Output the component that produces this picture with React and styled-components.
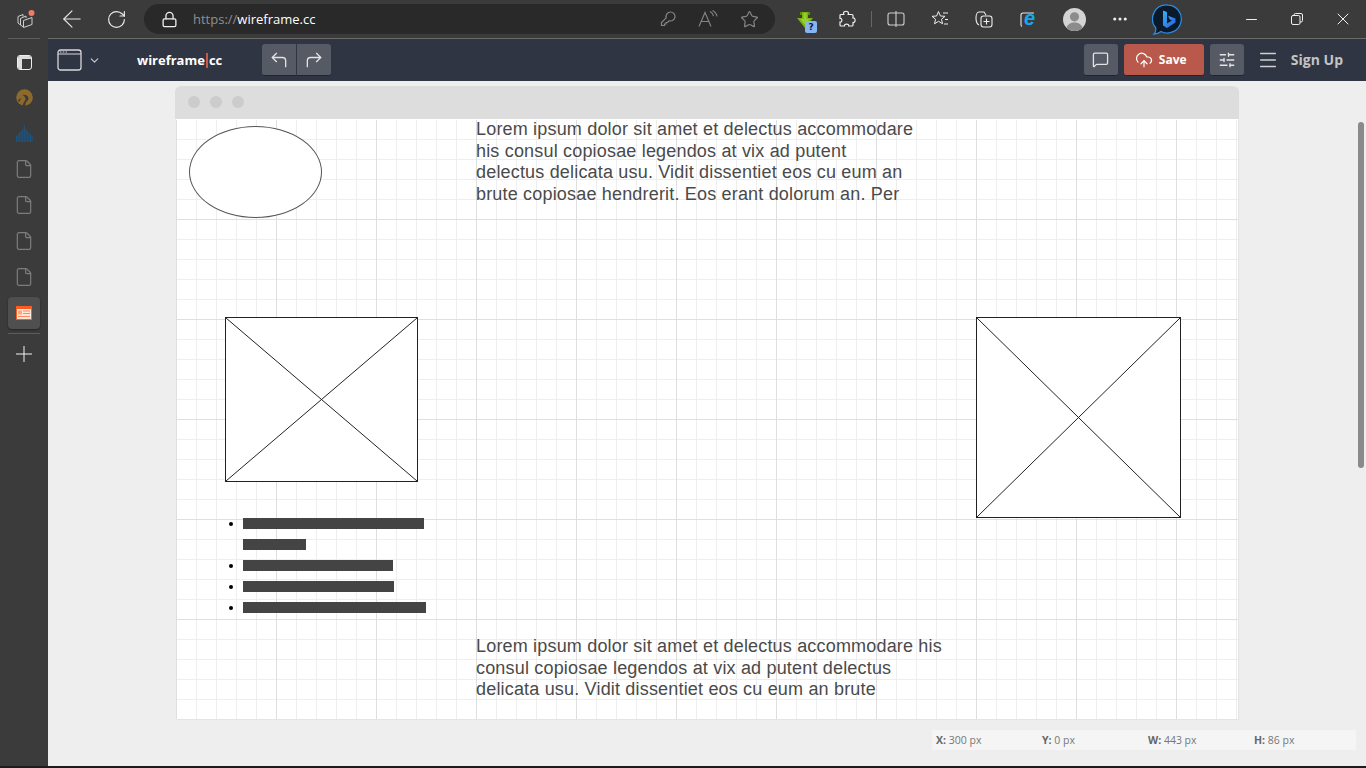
import React from "react";
import styled, { createGlobalStyle } from "styled-components";
import {
  ArrowLeft,
  ChevronDown,
  CloudUpload,
  CornerUpLeft,
  CornerUpRight,
  Ellipsis,
  File,
  Lock,
  Menu,
  MessageSquare,
  Minus,
  Plus,
  RotateCw,
  SlidersHorizontal,
  Star,
  X,
} from "lucide-react";

const GlobalStyle = createGlobalStyle`
  html, body {
    margin: 0;
    height: 100%;
    overflow: hidden;
    background: #3b3b3b;
    font-family: "Open Sans", "Liberation Sans", sans-serif;
  }
`;

const App = () => {
  return (
    <>
      <GlobalStyle />
      <Page>
        <BrowserBar>
          <Slot $w={52}>
            <WorkspaceIcon />
          </Slot>
          <Slot $w={40}>
            <ArrowLeft size={28} strokeWidth={1.1} absoluteStrokeWidth color="#e8e8e8" />
          </Slot>
          <Slot $w={48}>
            <RotateCw size={21} strokeWidth={1.2} absoluteStrokeWidth color="#e8e8e8" />
          </Slot>
          <AddressBar>
            <Lock size={17} strokeWidth={1.3} absoluteStrokeWidth color="#f0f0f0" />
            <Url>
              <span>https://</span>wireframe.cc
            </Url>
            <AddressIcons>
              <KeyIcon />
              <ReadAloudIcon />
              <Star size={19} strokeWidth={1.2} absoluteStrokeWidth color="#858585" />
            </AddressIcons>
          </AddressBar>
          <Slot $w={40} $ml={10}>
            <DownloadIcon />
          </Slot>
          <Slot $w={44}>
            <PuzzleIcon />
          </Slot>
          <BarDivider />
          <Slot $w={46}>
            <SplitIcon />
          </Slot>
          <Slot $w={42}>
            <FavoritesIcon />
          </Slot>
          <Slot $w={46}>
            <CollectionsIcon />
          </Slot>
          <Slot $w={42}>
            <IeIcon />
          </Slot>
          <Slot $w={50}>
            <ProfileIcon />
          </Slot>
          <Slot $w={42}>
            <Ellipsis size={18} strokeWidth={1.6} absoluteStrokeWidth color="#eeeeee" />
          </Slot>
          <Slot $w={52}>
            <BingIcon />
          </Slot>
          <Spacer />
          <Slot $w={46}>
            <Minus size={17} strokeWidth={1} absoluteStrokeWidth color="#f0f0f0" />
          </Slot>
          <Slot $w={46}>
            <RestoreIcon />
          </Slot>
          <Slot $w={46}>
            <X size={20} strokeWidth={1} absoluteStrokeWidth color="#f0f0f0" />
          </Slot>
        </BrowserBar>

        <Body>
          <SideBar>
            <SideRule $mt={0} $mb={7} />
            <SideSlot $h={33}>
              <TabsIcon />
            </SideSlot>
            <SideSlot>
              <PeakIcon />
            </SideSlot>
            <SideSlot>
              <ChartIcon />
            </SideSlot>
            {[0, 1, 2, 3].map((n) => (
              <SideSlot key={n}>
                <File size={20} strokeWidth={1.2} absoluteStrokeWidth color="#7d7d7d" />
              </SideSlot>
            ))}
            <ActiveTab>
              <WireTabIcon />
            </ActiveTab>
            <SideRule $mt={4} $mb={2} />
            <SideSlot>
              <Plus size={26} strokeWidth={1} absoluteStrokeWidth color="#f4f4f4" />
            </SideSlot>
          </SideBar>

          <Content>
            <AppBar>
              <WindowIcon />
              <ChevronSlot>
                <ChevronDown size={13} strokeWidth={1.2} absoluteStrokeWidth color="#c4c7cc" />
              </ChevronSlot>
              <Logo>
                wireframe<i />cc
              </Logo>
              <ButtonGroup>
                <ToolButton $joined="left">
                  <CornerUpLeft size={20} strokeWidth={1.3} absoluteStrokeWidth color="#e4e4e4" />
                </ToolButton>
                <ToolButton $joined="right">
                  <CornerUpRight size={20} strokeWidth={1.3} absoluteStrokeWidth color="#e4e4e4" />
                </ToolButton>
              </ButtonGroup>
              <Spacer />
              <ToolButton>
                <MessageSquare size={17} strokeWidth={1.3} absoluteStrokeWidth color="#e4e4e4" />
              </ToolButton>
              <SaveButton>
                <CloudUpload size={18} strokeWidth={1.2} absoluteStrokeWidth color="#ffffff" />
                Save
              </SaveButton>
              <ToolButton>
                <SlidersHorizontal size={18} strokeWidth={1.3} absoluteStrokeWidth color="#e4e4e4" />
              </ToolButton>
              <MenuSlot>
                <Menu size={22} strokeWidth={1.5} absoluteStrokeWidth color="#d0d0d0" />
              </MenuSlot>
              <SignUp>Sign Up</SignUp>
            </AppBar>

            <Workspace>
              <Frame>
                <FrameHeader>
                  <Dot />
                  <Dot />
                  <Dot />
                </FrameHeader>
                <Canvas>
                  <Ellipse />
                  <LoremTop>
                    Lorem ipsum dolor sit amet et delectus accommodare his
                    consul copiosae legendos at vix ad putent delectus delicata
                    usu. Vidit dissentiet eos cu eum an brute copiosae
                    hendrerit. Eos erant dolorum an. Per
                  </LoremTop>
                  <ImageBox $x={49} $y={198} $w={193} $h={165}>
                    <CrossLines />
                  </ImageBox>
                  <ImageBox $x={800} $y={198} $w={205} $h={201}>
                    <CrossLines />
                  </ImageBox>
                  <BarList>
                    <BarItem>
                      <Bar $w={181} />
                      <Bar $w={63} />
                    </BarItem>
                    <BarItem>
                      <Bar $w={150} />
                    </BarItem>
                    <BarItem>
                      <Bar $w={151} />
                    </BarItem>
                    <BarItem>
                      <Bar $w={183} />
                    </BarItem>
                  </BarList>
                  <LoremBottom>
                    Lorem ipsum dolor sit amet et delectus accommodare his
                    consul copiosae legendos at vix ad putent delectus delicata
                    usu. Vidit dissentiet eos cu eum an brute
                  </LoremBottom>
                </Canvas>
              </Frame>
              <ScrollThumb />
              <StatusBar>
                <StatusItem>
                  <b>X:</b> 300 px
                </StatusItem>
                <StatusItem>
                  <b>Y:</b> 0 px
                </StatusItem>
                <StatusItem>
                  <b>W:</b> 443 px
                </StatusItem>
                <StatusItem>
                  <b>H:</b> 86 px
                </StatusItem>
              </StatusBar>
            </Workspace>
          </Content>
        </Body>
        <BottomEdge />
      </Page>
    </>
  );
};

export default App;

const CrossLines = () => (
  <CrossSvg viewBox="0 0 100 100" preserveAspectRatio="none">
    <line x1="0" y1="0" x2="100" y2="100" vectorEffect="non-scaling-stroke" />
    <line x1="100" y1="0" x2="0" y2="100" vectorEffect="non-scaling-stroke" />
  </CrossSvg>
);

const WorkspaceIcon = () => (
  <svg width="20" height="20" viewBox="0 0 20 20" fill="none" stroke="#cfcfcf" strokeWidth="1">
    <path d="M2 7.500 7 5.500v2M2 7.500v6.500l2.500 2" />
    <path d="M4.500 9.500 10 7v2M4.500 9.500v6.500l3 2" />
    <path d="M7.500 11.500 16 8.500v7l-8.500 3z" />
    <circle cx="15.500" cy="4" r="3" fill="#f07b6b" stroke="none" />
  </svg>
);

const KeyIcon = () => (
  <svg width="16" height="16" viewBox="0 0 16 16" fill="none" stroke="#858585" strokeWidth="1.2">
    <path d="M10.500 1a4.500 4.500 0 1 1-1.300 8.800L7.500 11.500H6v1.500H4.500v1.500H1.500v-3l4.700-4.700A4.500 4.500 0 0 1 10.500 1z" />
  </svg>
);

const ReadAloudIcon = () => (
  <svg width="22" height="18" viewBox="0 0 22 18" fill="none" stroke="#858585" strokeWidth="1.1">
    <path d="M2 16.500 8 2.500l6 14M4.200 11.500h7.600" />
    <path d="M13 1.500c2 1 3.200 2.600 3.600 4.600M15.500 0.500c2.600 1.400 4.200 3.600 4.600 6" />
  </svg>
);

const DownloadIcon = () => (
  <DownloadWrap>
    <svg width="16" height="16" viewBox="0 0 16 16">
      <path d="M3 0h2v3H3zM11 0h2v3h-2z" fill="#5d8f0e" />
      <path d="M5 0h6v6h5l-8 10L0 6h5z" fill="#79b414" />
      <path d="M6.500 1h3v6h3L8 13 3.500 7h3z" fill="#9ad028" />
    </svg>
    <QuestionBadge>?</QuestionBadge>
  </DownloadWrap>
);

const PuzzleIcon = () => (
  <svg width="18" height="18" viewBox="0 0 18 18" fill="none" stroke="#eeeeee" strokeWidth="1.200">
    <path d="M5.500 3.500c0-3 5-3 5 0 0 .5-.3 1-.3 1H14a1 1 0 0 1 1 1V8c2.800-.6 2.800 5 0 4.500V15a1 1 0 0 1-1 1h-3.300c.6-2.600-4.800-2.600-4.200 0H3a1 1 0 0 1-1-1v-3c2.500.5 2.500-4 0-3.500V5.500a1 1 0 0 1 1-1h2.800s-.3-.5-.3-1z" />
  </svg>
);

const RestoreIcon = () => (
  <svg width="12" height="12" viewBox="0 0 12 12" fill="none" stroke="#f0f0f0" strokeWidth="1">
    <rect x="0.500" y="2.500" width="8.500" height="9" rx="1.500" />
    <path d="M3 2.500V2a1.500 1.500 0 0 1 1.500-1.500H10A1.500 1.500 0 0 1 11.500 2v5.500A1.500 1.500 0 0 1 10 9h-1" />
  </svg>
);

const SplitIcon = () => (
  <svg width="18" height="16" viewBox="0 0 18 16" fill="none" stroke="#d0d0d0" strokeWidth="1.100">
    <rect x="1" y="2" width="16" height="12" rx="2" />
    <path d="M9 0v16" />
  </svg>
);

const FavoritesIcon = () => (
  <svg width="18" height="18" viewBox="0 0 18 18" fill="none" stroke="#eeeeee" strokeWidth="1">
    <path d="M7.500 1.500 9.400 6l4.600.3-3.500 3 1.100 4.500-4.100-2.500-4 2.500 1.100-4.500L1 6.300 5.600 6z" />
    <path d="M12 3h5M14 9.500h3M13 14h4" />
  </svg>
);

const CollectionsIcon = () => (
  <svg width="18" height="18" viewBox="0 0 18 18" fill="none" stroke="#eeeeee" strokeWidth="1.100">
    <path d="M4 15c-2-1-3-4-3-7 0-3 1-6 3-6h5l2 3" />
    <rect x="6" y="6" width="11" height="11" rx="2.500" />
    <path d="M11.500 8.500v6M8.500 11.500h6" />
  </svg>
);

const IeIcon = () => (
  <IeWrap>
    <svg width="16" height="16" viewBox="0 0 16 16" fill="none" stroke="#e8e8e8" strokeWidth="1.100">
      <path d="M14 1H3A2 2 0 0 0 1 3V13a2 2 0 0 0 1 1.500" />
    </svg>
    <IeLetter>e</IeLetter>
  </IeWrap>
);

const ProfileIcon = () => (
  <svg width="23" height="23" viewBox="0 0 23 23">
    <circle cx="11.500" cy="11.500" r="11.500" fill="#d4d4d4" />
    <circle cx="11.500" cy="8.800" r="4.600" fill="#8c8c8c" />
    <path d="M3.500 19.800c1.200-3.600 4.400-5.200 8-5.200s6.800 1.600 8 5.200A11.500 11.500 0 0 1 11.500 23a11.500 11.500 0 0 1-8-3.200z" fill="#8c8c8c" />
  </svg>
);

const BingIcon = () => (
  <svg width="31" height="31" viewBox="0 0 31 31">
    <defs>
      <linearGradient id="bingFill" x1="0" y1="0" x2="1" y2="1">
        <stop offset="0" stopColor="#36b4f0" />
        <stop offset="1" stopColor="#2a5fe0" />
      </linearGradient>
    </defs>
    <path d="M15.500 1A14 14 0 1 1 9 27.500c-2 1.500-4 2.500-7 2.500 1.500-1.500 2-3.500 1.800-6A14 14 0 0 1 15.500 1z" fill="#0b1a2b" stroke="#2b8be0" strokeWidth="1.300" />
    <path d="M11 6.500l4 1.500v11.500l5-3-2.500-1.200-1.400-3.500 7.400 2.600v4L15 24l-4-2.500z" fill="url(#bingFill)" />
  </svg>
);

const TabsIcon = () => (
  <svg width="15" height="15" viewBox="0 0 15 15">
    <rect x="0.500" y="0.500" width="14" height="14" rx="2.500" fill="#3b3b3b" stroke="#eeeeee" />
    <path d="M1 3a2 2 0 0 1 2-2h9a2 2 0 0 1 2 2v1H5v10H3a2 2 0 0 1-2-2z" fill="#dddddd" />
  </svg>
);

const PeakIcon = () => (
  <svg width="17" height="17" viewBox="0 0 17 17">
    <circle cx="8.500" cy="8.500" r="8.300" fill="#8c6a2c" />
    <path d="M6.500 17c.5-3.500 2.500-5 3-6.500.5-1.800-1-3.500-3-4.500 3-.6 5.500.8 6 3 .4 1.800-1.500 2.800-2.300 4-.7 1.100-1 2.700-1 4.200z" fill="#3b3b3b" />
    <path d="M2 11.500c1-1.500 2.500-2.300 4-2.300-1.500 1-2.500 2.300-3 4z" fill="#3b3b3b" />
  </svg>
);

const chartHeights = [6, 8, 10, 11, 13, 17, 13, 11, 10, 8, 6];

const ChartIcon = () => (
  <svg width="17" height="17" viewBox="0 0 17 17" fill="#1d5482">
    {chartHeights.map((h, i) => (
      <rect key={i} x={i * 1.55} y={17 - h} width="1.100" height={h} />
    ))}
  </svg>
);

const WireTabIcon = () => (
  <svg width="16" height="14" viewBox="0 0 16 14">
    <rect width="16" height="14" fill="#ff5a1f" />
    <rect x="1" y="3" width="14" height="10" fill="#ffe6d8" />
    <rect x="2" y="4.500" width="4" height="4" fill="#ffa680" />
    <rect x="7" y="4.500" width="7" height="1" fill="#ff8a55" />
    <rect x="7" y="7" width="7" height="1" fill="#ff8a55" />
    <rect x="2" y="10" width="12" height="1" fill="#ff8a55" />
  </svg>
);

const WindowIcon = () => (
  <svg width="25" height="22" viewBox="0 0 25 22" fill="none" stroke="#d8d8d8" strokeWidth="1.300">
    <rect x="1" y="1" width="23" height="20" rx="2.500" />
    <path d="M1 5h23" strokeWidth="1" />
    <path d="M3 3h1.500M5.800 3h1.500M8.600 3h1.500" strokeWidth="1.200" />
  </svg>
);

const Page = styled.div`
  width: 1366px;
  height: 768px;
  display: flex;
  flex-direction: column;
  overflow: hidden;
  background: #3b3b3b;
`;

const BrowserBar = styled.header`
  height: 38px;
  flex: none;
  display: flex;
  align-items: center;
  background: #3b3b3b;
`;

const Slot = styled.div`
  width: ${(props) => props.$w}px;
  margin-left: ${(props) => props.$ml || 0}px;
  flex: none;
  display: flex;
  align-items: center;
  justify-content: center;
`;

const Spacer = styled.div`
  flex: 1;
`;

const AddressBar = styled.div`
  width: 631px;
  height: 30px;
  margin-left: 4px;
  padding: 0 16px 0 17px;
  box-sizing: border-box;
  flex: none;
  display: flex;
  align-items: center;
  border-radius: 15px;
  background: #292929;
`;

const Url = styled.div`
  margin-left: 15px;
  font-size: 13px;
  color: #ffffff;

  span {
    color: #8f8f8f;
  }
`;

const AddressIcons = styled.div`
  margin-left: auto;
  display: flex;
  align-items: center;
  gap: 21px;
`;

const BarDivider = styled.div`
  width: 1px;
  height: 16px;
  margin: 0 1.5px;
  flex: none;
  background: #666666;
`;

const DownloadWrap = styled.div`
  position: relative;
  width: 16px;
  height: 16px;
`;

const QuestionBadge = styled.span`
  position: absolute;
  right: -4px;
  bottom: -6px;
  width: 12px;
  height: 12px;
  border-radius: 2px;
  background: #86b5f5;
  color: #111a33;
  font: bold 9px/12px "DejaVu Sans", sans-serif;
  text-align: center;
`;

const IeWrap = styled.div`
  position: relative;
  width: 16px;
  height: 16px;
`;

const IeLetter = styled.span`
  position: absolute;
  left: 4px;
  top: -4px;
  color: #19a6ee;
  font: italic bold 20px/22px "Liberation Sans", sans-serif;
`;

const Body = styled.div`
  flex: 1;
  display: flex;
  min-height: 0;
`;

const SideBar = styled.nav`
  width: 48px;
  padding: 0 8px;
  box-sizing: border-box;
  flex: none;
  display: flex;
  flex-direction: column;
  align-items: center;
`;

const SideSlot = styled.div`
  width: 32px;
  height: ${(props) => props.$h || 36}px;
  flex: none;
  display: flex;
  align-items: center;
  justify-content: center;
`;

const ActiveTab = styled.div`
  width: 32px;
  height: 32px;
  margin-top: 2px;
  flex: none;
  display: flex;
  align-items: center;
  justify-content: center;
  border-radius: 4px;
  background: #4f4f4f;
  box-shadow: 0 1px 2px rgba(0, 0, 0, 0.4);
`;

const SideRule = styled.div`
  width: 32px;
  height: 1px;
  margin: ${(props) => props.$mt}px 0 ${(props) => props.$mb}px;
  flex: none;
  background: #5c5c5c;
`;

const Content = styled.main`
  flex: 1;
  min-width: 0;
  display: flex;
  flex-direction: column;
`;

const AppBar = styled.div`
  height: 43px;
  padding: 0 23px 0 9px;
  box-sizing: border-box;
  flex: none;
  display: flex;
  align-items: center;
  border-top: 1px solid #6a6a6a;
  background: #2f3542;
`;

const ChevronSlot = styled.div`
  margin-left: 6px;
  display: flex;
`;

const Logo = styled.div`
  width: 85px;
  margin-left: 36px;
  flex: none;
  display: flex;
  align-items: center;
  font-size: 13px;
  font-weight: 700;
  color: #ffffff;
  white-space: nowrap;

  i {
    width: 2px;
    height: 15px;
    margin: 0 1px;
    flex: none;
    background: #c9574a;
  }
`;

const ButtonGroup = styled.div`
  margin-left: 40px;
  display: flex;
  gap: 1px;
`;

const ToolButton = styled.button`
  width: 34px;
  height: 32px;
  padding: 0;
  flex: none;
  display: flex;
  align-items: center;
  justify-content: center;
  border: none;
  border-bottom: 1px solid #20242d;
  border-radius: ${(props) =>
    props.$joined === "left"
      ? "3px 0 0 3px"
      : props.$joined === "right"
        ? "0 3px 3px 0"
        : "3px"};
  background: #565a64;
`;

const SaveButton = styled.button`
  width: 80px;
  height: 32px;
  margin: 0 6px;
  padding: 0 0 0 11px;
  flex: none;
  display: flex;
  align-items: center;
  gap: 6px;
  border: none;
  border-bottom: 1px solid #20242d;
  border-radius: 3px;
  background: #b9594c;
  color: #ffffff;
  font-family: "Open Sans", sans-serif;
  font-size: 12px;
  font-weight: 700;
`;

const MenuSlot = styled.div`
  margin-left: 13px;
  display: flex;
`;

const SignUp = styled.div`
  margin: 0 0 1px 12px;
  font-size: 14px;
  font-weight: 700;
  color: #c4c4c4;
`;

const Workspace = styled.div`
  position: relative;
  flex: 1;
  min-height: 0;
  padding: 5px 0 0 127px;
  box-sizing: border-box;
  background: #eeeeee;
`;

const Frame = styled.div`
  width: 1064px;
  display: flex;
  flex-direction: column;
`;

const FrameHeader = styled.div`
  height: 33px;
  padding: 0 0 1px 13px;
  box-sizing: border-box;
  display: flex;
  align-items: center;
  gap: 10px;
  border-radius: 6px 6px 0 0;
  background: #dddddd;
`;

const Dot = styled.span`
  width: 12px;
  height: 12px;
  border-radius: 50%;
  background: #cccccc;
`;

const Canvas = styled.div`
  position: relative;
  height: 600px;
  margin-left: 1px;
  width: 1062px;
  box-shadow:
    inset 0 1px 0 #ffffff,
    1px 1px 0 #e4e4e4;
  overflow: hidden;
  background-color: #ffffff;
  background-image:
    linear-gradient(to right, #dfdfdf 1px, transparent 1px),
    linear-gradient(to bottom, #dfdfdf 1px, transparent 1px),
    linear-gradient(to right, #eeeeee 1px, transparent 1px),
    linear-gradient(to bottom, #eeeeee 1px, transparent 1px);
  background-size:
    100px 100px,
    100px 100px,
    20px 20px,
    20px 20px;
`;

const Ellipse = styled.div`
  position: absolute;
  left: 13px;
  top: 7px;
  width: 133px;
  height: 92px;
  box-sizing: border-box;
  border: 1px solid #555555;
  border-radius: 50%;
  background: #ffffff;
`;

const LoremBlock = styled.p`
  position: absolute;
  left: 300px;
  margin: 0;
  overflow: hidden;
  font-family: "Liberation Sans", Arial, sans-serif;
  font-size: 18px;
  letter-spacing: 0.18px;
  line-height: 21.600px;
  color: #4a4a4a;
`;

const LoremTop = styled(LoremBlock)`
  top: 0;
  width: 440px;
  height: 86px;
`;

const LoremBottom = styled(LoremBlock)`
  top: 517px;
  width: 472px;
  height: 66px;
`;

const ImageBox = styled.div`
  position: absolute;
  left: ${(props) => props.$x}px;
  top: ${(props) => props.$y}px;
  width: ${(props) => props.$w}px;
  height: ${(props) => props.$h}px;
  box-sizing: border-box;
  border: 1px solid #222222;
  background: #ffffff;
`;

const CrossSvg = styled.svg`
  display: block;
  width: 100%;
  height: 100%;

  line {
    stroke: #222222;
    stroke-width: 1;
  }
`;

const BarList = styled.ul`
  position: absolute;
  left: 67px;
  top: 399px;
  margin: 0;
  padding: 0;
  list-style: none;
`;

const BarItem = styled.li`
  position: relative;

  &::before {
    content: "";
    position: absolute;
    left: -14px;
    top: 4px;
    width: 4px;
    height: 4px;
    border-radius: 50%;
    background: #000000;
  }
`;

const Bar = styled.div`
  width: ${(props) => props.$w}px;
  height: 11px;
  margin-bottom: 10px;
  background: #444444;
`;

const ScrollThumb = styled.div`
  position: absolute;
  right: 2px;
  top: 41px;
  width: 6px;
  height: 346px;
  border-radius: 3px;
  background: #8a8a8a;
`;

const StatusBar = styled.div`
  width: 424px;
  height: 20px;
  margin: 11px 0 0 757px;
  padding-left: 4px;
  box-sizing: border-box;
  display: flex;
  align-items: center;
  background: #f5f5f5;
`;

const StatusItem = styled.div`
  width: 106px;
  flex: none;
  font-size: 10.500px;
  color: #777777;

  b {
    font-weight: 700;
    color: #666666;
  }
`;

const BottomEdge = styled.div`
  height: 2px;
  flex: none;
  background: #1c1c1c;
`;
